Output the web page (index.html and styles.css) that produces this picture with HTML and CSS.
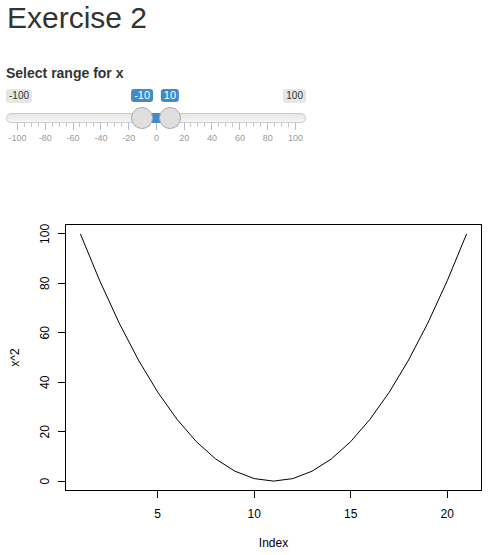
FILE: index.html
```html
<!DOCTYPE html>
<html>
<head>
  <title>Exercise 2</title>
  <link rel="stylesheet" href="styles.css">
</head>
<body>
  <div class="controls">
    <h2 class="title">Exercise 2</h2>
    <label class="control-label">Select range for x</label>

    <div class="irs">
      <div class="irs-ends">
        <span class="irs-min">-100</span>
        <span class="irs-max">100</span>
      </div>
      <div class="irs-line"></div>
      <div class="irs-grid">
        <div class="irs-ticks">
          <i class="big"></i><i></i><i></i><i></i>
          <i class="big"></i><i></i><i></i><i></i>
          <i class="big"></i><i></i><i></i><i></i>
          <i class="big"></i><i></i><i></i><i></i>
          <i class="big"></i><i></i><i></i><i></i>
          <i class="big"></i><i></i><i></i><i></i>
          <i class="big"></i><i></i><i></i><i></i>
          <i class="big"></i><i></i><i></i><i></i>
          <i class="big"></i><i></i><i></i><i></i>
          <i class="big"></i><i></i><i></i><i></i>
          <i class="big"></i>
        </div>
        <div class="irs-grid-labels">
          <span>-100</span><span>-80</span><span>-60</span><span>-40</span><span>-20</span>
          <span>0</span><span>20</span><span>40</span><span>60</span><span>80</span><span>100</span>
        </div>
      </div>

      <!-- range -10 .. 10 -->
      <div class="irs-bar" style="left: 136.1px; width: 27.8px;"></div>
      <span class="irs-from" style="left: 136.1px;">-10</span>
      <span class="irs-to" style="left: 163.9px;">10</span>
      <div class="irs-handle" style="left: 136.1px;"></div>
      <div class="irs-handle" style="left: 163.9px;"></div>
    </div>
  </div>

  <svg class="plot" width="501" height="400" viewBox="0 155 501 400" xmlns="http://www.w3.org/2000/svg">
    <g class="axes" stroke="#000" stroke-width="1" fill="none" shape-rendering="crispEdges">
      <rect x="65.5" y="223.5" width="416" height="266"/>
      <!-- y axis -->
      <line x1="65.5" y1="232.5" x2="65.5" y2="480.5"/>
      <line x1="58" y1="480.5" x2="65.5" y2="480.5"/>
      <line x1="58" y1="430.5" x2="65.5" y2="430.5"/>
      <line x1="58" y1="381.5" x2="65.5" y2="381.5"/>
      <line x1="58" y1="331.5" x2="65.5" y2="331.5"/>
      <line x1="58" y1="282.5" x2="65.5" y2="282.5"/>
      <line x1="58" y1="232.5" x2="65.5" y2="232.5"/>
      <!-- x axis -->
      <line x1="157.5" y1="489.5" x2="447.5" y2="489.5"/>
      <line x1="157.5" y1="489.5" x2="157.5" y2="497"/>
      <line x1="254.5" y1="489.5" x2="254.5" y2="497"/>
      <line x1="350.5" y1="489.5" x2="350.5" y2="497"/>
      <line x1="447.5" y1="489.5" x2="447.5" y2="497"/>
    </g>

    <g class="tick-labels">
      <text x="49" y="480.1" transform="rotate(-90 49 480.1)">0</text>
      <text x="49" y="430.7" transform="rotate(-90 49 430.7)">20</text>
      <text x="49" y="381.2" transform="rotate(-90 49 381.2)">40</text>
      <text x="49" y="331.8" transform="rotate(-90 49 331.8)">60</text>
      <text x="49" y="282.3" transform="rotate(-90 49 282.3)">80</text>
      <text x="49" y="232.9" transform="rotate(-90 49 232.9)">100</text>

      <text x="157.7" y="517">5</text>
      <text x="254.2" y="517">10</text>
      <text x="350.7" y="517">15</text>
      <text x="447.2" y="517">20</text>

      <text x="273.5" y="546">Index</text>
      <text x="19" y="356.5" transform="rotate(-90 19 356.5)">x^2</text>
    </g>

    <polyline class="curve" points="80.4,232.9 99.8,279.9 119.1,321.9 138.4,359.0 157.7,391.1 177.0,418.3 196.3,440.6 215.6,457.9 234.9,470.2 254.2,477.6 273.5,480.1 292.8,477.6 312.1,470.2 331.4,457.9 350.7,440.6 370.0,418.3 389.3,391.1 408.6,359.0 427.9,321.9 447.2,279.9 466.6,232.9"/>
  </svg>
</body>
</html>
```

FILE: styles.css
```css
body {
  margin: 0;
  padding: 0;
  font-family: "Liberation Sans", Arial, Helvetica, sans-serif;
  color: #333;
  background: #fff;
}

.controls {
  height: 155px;
  padding: 0 6px;
  box-sizing: border-box;
}

.title {
  margin: 1px 0 0 1px;
  font-size: 30px;
  font-weight: 400;
  line-height: 33px;
}

.control-label {
  display: block;
  margin-top: 29px;
  font-size: 14px;
  font-weight: bold;
  line-height: 20px;
}

/* range slider */
.irs {
  position: relative;
  width: 300px;
  margin-top: 6px;
}

.irs-ends {
  display: flex;
  justify-content: space-between;
  height: 14px;
}

.irs-min,
.irs-max {
  height: 14px;
  padding: 0 3px;
  font-size: 10px;
  line-height: 14px;
  color: #333;
  background: #e6e6e6;
  border-radius: 3px;
}

.irs-line {
  height: 8px;
  margin-top: 10px;
  background: linear-gradient(to bottom, #dedede -50%, #fff 150%);
  border: 1px solid #ccc;
  border-radius: 16px;
}

.irs-ticks {
  display: flex;
  justify-content: space-between;
  align-items: flex-start;
  height: 8px;
  margin: 0 10px 0 11px;
}

.irs-ticks i {
  width: 1px;
  height: 4px;
  background: #c4c4c4;
}

.irs-ticks i.big {
  height: 7px;
  background: #9dc2e5;
}

.irs-grid-labels {
  display: flex;
  justify-content: space-between;
  margin: 2px 10px 0 11px;
  font-size: 9px;
  line-height: 11px;
  color: #999;
}

.irs-grid-labels span {
  width: 1px;
  display: flex;
  justify-content: center;
  white-space: nowrap;
}

.irs-bar {
  position: absolute;
  top: 24px;
  height: 10px;
  background: #428bca;
}

.irs-from,
.irs-to {
  position: absolute;
  top: 0;
  height: 13px;
  padding: 0 3px;
  transform: translateX(-50%);
  font-size: 11px;
  line-height: 13px;
  color: #fff;
  background: #428bca;
  border-radius: 3px;
}

.irs-handle {
  position: absolute;
  top: 18px;
  width: 22px;
  height: 22px;
  margin-left: -11px;
  box-sizing: border-box;
  background: #dfdfdf;
  border: 1px solid #aaa;
  border-radius: 50%;
}

/* plot */
.plot {
  display: block;
}

.tick-labels text {
  font-family: "Liberation Sans", Arial, sans-serif;
  font-size: 12px;
  fill: #000;
  text-anchor: middle;
}

.curve {
  fill: none;
  stroke: #000;
  stroke-width: 1;
}
```
